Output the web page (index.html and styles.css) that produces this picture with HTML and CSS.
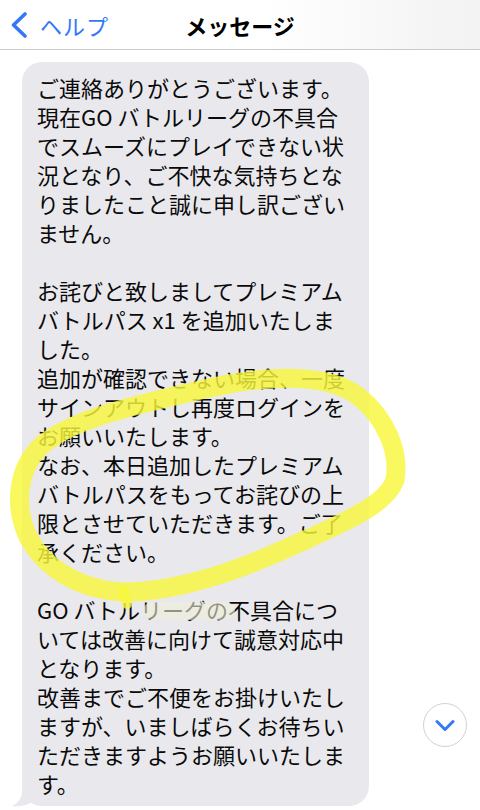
FILE: index.html
```html
<!DOCTYPE html>
<html lang="ja">
<head>
<meta charset="utf-8">
<title>メッセージ</title>
<link rel="stylesheet" href="styles.css">
</head>
<body>
<div class="screen">
  <header class="nav">
    <div class="back">
      <svg class="chev" width="16" height="26" viewBox="0 0 16 26"><path d="M14 2 L2.5 13 L14 24" fill="none" stroke="#3478f6" stroke-width="3.6" stroke-linecap="round" stroke-linejoin="round"/></svg>
      <span class="back-text">ヘルプ</span>
    </div>
    <div class="title">メッセージ</div>
    <div></div>
  </header>
  <main class="thread">
    <div class="bubble">
      <p class="msg">ご連絡ありがとうございます。<br>現在GO バトルリーグの不具合<br>でスムーズにプレイできない状<br>況となり、ご不快な気持ちとな<br>りましたこと誠に申し訳ござい<br>ません。<br><br>お詫びと致しましてプレミアム<br>バトルパス x1 を追加いたしま<br>した。<br>追加が確認できない場合、一度<br>サインアウトし再度ログインを<br>お願いいたします。<br>なお、本日追加したプレミアム<br>バトルパスをもってお詫びの上<br>限とさせていただきます。ご了<br>承ください。<br><br>GO バトルリーグの不具合につ<br>いては改善に向けて誠意対応中<br>となります。<br>改善までご不便をお掛けいたし<br>ますが、いましばらくお待ちい<br>ただきますようお願いいたしま<br>す。</p>
      <svg class="tail" width="24" height="22" viewBox="0 0 24 22"><path d="M10 0 L10 6 C10 12 6 17 0 20 C6 21 14 20 20 16 L24 16 L24 0 Z" fill="#e9e9ed"/></svg>
    </div>
  </main>
  <svg class="marker" width="480" height="810" viewBox="0 0 480 810">
    <path d="M 205 389 C 260 376, 325 371, 358 396 C 386 418, 400 452, 395 480 C 386 506, 340 524, 292 546 C 244 568, 182 591, 127 592 C 82 591, 46 570, 28 537 C 14 506, 17 470, 40 447 C 68 421, 125 407, 205 389 Z" fill="none" stroke="rgba(248,246,60,0.82)" stroke-width="19" stroke-linecap="round" stroke-linejoin="round"/>
    <path d="M 123 590 L 127 604" fill="none" stroke="rgba(248,246,60,0.82)" stroke-width="10" stroke-linecap="round"/>
    <path d="M 152 611 L 226 611" fill="none" stroke="rgba(238,238,215,0.6)" stroke-width="18" stroke-linecap="round"/>
  </svg>
  <button class="scroll-down" type="button" aria-label="下へ">
    <svg width="20" height="14" viewBox="0 0 20 14"><path d="M2 2.5 L10 10.5 L18 2.5" fill="none" stroke="#3478f6" stroke-width="3" stroke-linecap="round" stroke-linejoin="round"/></svg>
  </button>
</div>
</body>
</html>
```

FILE: styles.css
```css
* { box-sizing: border-box; }
html, body { margin: 0; padding: 0; background: #ffffff; }
body {
  font-family: "Noto Sans CJK JP", "Noto Sans", sans-serif;
  color: #000;
}
.screen {
  position: relative;
  width: 480px;
  height: 810px;
  overflow: hidden;
}
.nav {
  height: 50px;
  display: grid;
  grid-template-columns: 1fr auto 1fr;
  align-items: center;
  border-bottom: 1px solid #cacaca;
  background: linear-gradient(90deg, #ffffff 0%, #ffffff 55%, #f2f2f2 100%);
}
.back {
  display: flex;
  align-items: center;
  gap: 13px;
  padding-left: 11px;
  color: #3478f6;
}
.chev { display: block; margin-top: 1px; }
.back-text {
  font-size: 22px;
  line-height: 1;
  letter-spacing: 1px;
}
.title {
  font-size: 22px;
  font-weight: 700;
  line-height: 1;
  letter-spacing: 0;
}
.thread {
  padding: 12px 0 0 22px;
}
.bubble {
  position: relative;
  width: 347px;
  background: #e9e9ed;
  border-radius: 20px;
  padding: 11px 8px 8px 15px;
}
.msg {
  margin: 0;
  font-size: 22px;
  line-height: 29px;
  white-space: nowrap;
  color: #0a0a0a;
}
.tail {
  position: absolute;
  left: -10px;
  bottom: -2px;
}
.marker {
  position: absolute;
  left: 0;
  top: 0;
  pointer-events: none;
}
.scroll-down {
  position: absolute;
  left: 423px;
  top: 703px;
  width: 44px;
  height: 44px;
  border-radius: 50%;
  border: 1px solid #d2d2d2;
  background: #ffffff;
  display: flex;
  align-items: center;
  justify-content: center;
  padding: 0;
}
.scroll-down svg { display: block; margin-top: 2px; }
```
